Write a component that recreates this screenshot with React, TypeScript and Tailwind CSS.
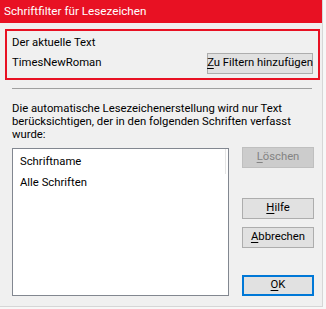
import React from "react";

function DlgButton({
  children,
  className = "",
  disabled = false,
  primary = false,
}: {
  children: React.ReactNode;
  className?: string;
  disabled?: boolean;
  primary?: boolean;
}) {
  const look = disabled
    ? "bg-[#cccccc] border border-[#bfbfbf] text-[#838383]"
    : primary
    ? "bg-[#e1e1e1] border-2 border-[#0078d7] text-black"
    : "bg-[#e1e1e1] border border-[#adadad] text-black";
  return (
    <div className={`flex items-center justify-center whitespace-nowrap ${look} ${className}`}>
      {children}
    </div>
  );
}

export default function App() {
  return (
    <div className="w-[326px] h-[309px] bg-[#f7f7f7] font-['Roboto',sans-serif] text-[11.3px] text-black overflow-hidden">
      <div className="w-[323px] h-[307px] bg-[#f0f0f0] border-r border-b border-[#d6d6d6] flex flex-col">
        {/* Title bar */}
        <div className="h-[23px] shrink-0 bg-[#e81123] text-white text-[11.7px] pl-[4px] flex items-center">
          Schriftfilter für Lesezeichen
        </div>

        {/* Current text group */}
        <div className="pl-[5px] pr-[2px] pt-[6px]">
          <div className="h-[51px] border-2 border-[#e81123] pl-[5px] pr-[5px] flex flex-col">
            <div className="pt-[4px] leading-[15px]">Der aktuelle Text</div>
            <div className="mt-[3px] flex items-center justify-between">
              <span>TimesNewRoman</span>
              <DlgButton className="w-[106px] h-[21px]">
                <span>
                  <u className="underline-offset-2">Z</u>u Filtern hinzufügen
                </span>
              </DlgButton>
            </div>
          </div>
        </div>

        {/* Separator */}
        <div className="ml-[12px] mr-[10px] mt-[8px] h-px bg-[#a0a0a0] shrink-0" />

        {/* Description */}
        <div className="pl-[12px] pr-[10px] mt-[13px] leading-[13px]">
          Die automatische Lesezeichenerstellung wird nur Text
          <br />
          berücksichtigen, der in den folgenden Schriften verfasst
          <br />
          wurde:
        </div>

        {/* List + buttons */}
        <div className="flex pl-[12px] mt-[7px]">
          <div className="w-[217px] h-[148px] bg-white border border-[#828790] flex flex-col">
            <div className="h-[27px] flex items-center">
              <span className="pl-[7px] flex-1">Schriftname</span>
              <div className="w-px h-[25px] bg-[#e5e5e5] mr-[2px] self-start" />
            </div>
            <div className="h-[14px] flex items-center pl-[7px]">Alle Schriften</div>
          </div>

          <div className="ml-[13px] flex flex-col">
            <DlgButton disabled className="w-[72px] h-[21px] mt-[-1px]">
              <span>
                <u className="underline-offset-2">L</u>öschen
              </span>
            </DlgButton>
            <DlgButton className="w-[72px] h-[21px] mt-[30px]">
              <span>
                <u className="underline-offset-2">H</u>ilfe
              </span>
            </DlgButton>
            <DlgButton className="w-[72px] h-[21px] mt-[8px]">
              <span>
                <u className="underline-offset-2">A</u>bbrechen
              </span>
            </DlgButton>
            <DlgButton primary className="w-[72px] h-[21px] mt-[27px]">
              <span>
                <u className="underline-offset-2">O</u>K
              </span>
            </DlgButton>
          </div>
        </div>
      </div>
    </div>
  );
}
